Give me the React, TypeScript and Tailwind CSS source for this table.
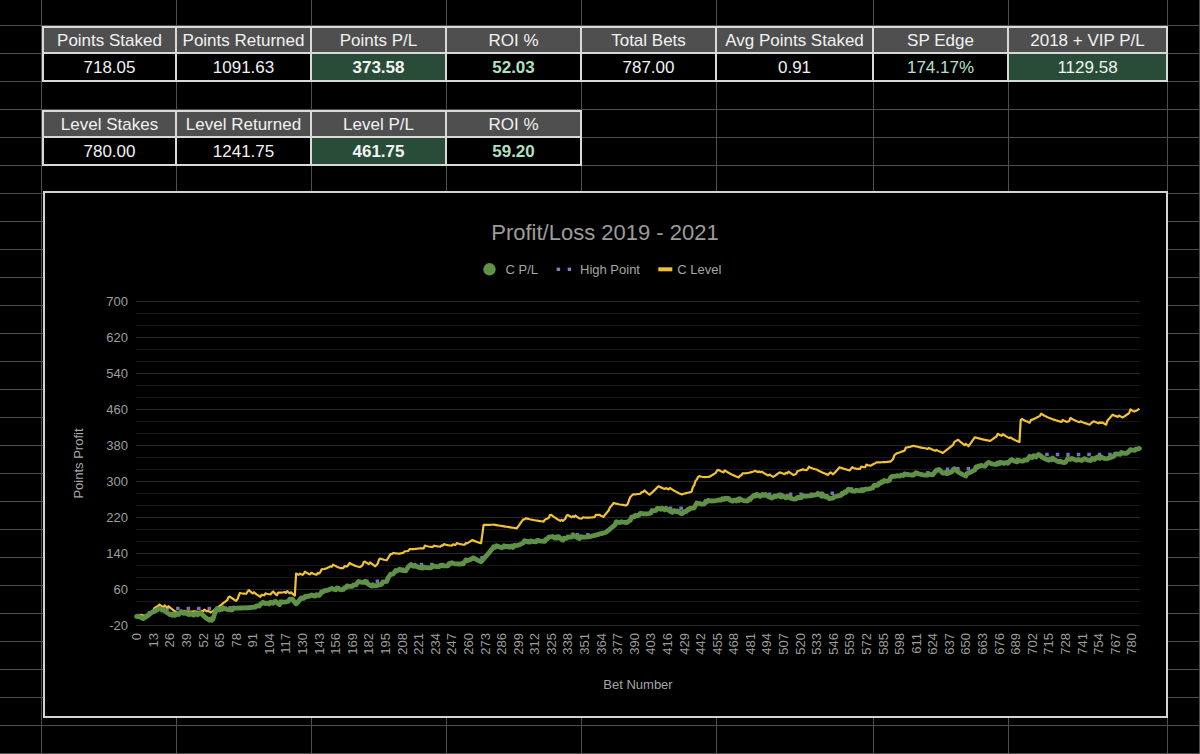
import React from "react";

function mulberry32(seed: number) {
  let a = seed;
  return function () {
    a |= 0;
    a = (a + 0x6d2b79f5) | 0;
    let t = Math.imul(a ^ (a >>> 15), 1 | a);
    t = (t + Math.imul(t ^ (t >>> 7), 61 | t)) ^ t;
    return ((t ^ (t >>> 14)) >>> 0) / 4294967296;
  };
}

function interp(keys: number[][], n: number): number[] {
  const out: number[] = [];
  let k = 0;
  for (let i = 0; i < n; i++) {
    while (k < keys.length - 2 && i > keys[k + 1][0]) k++;
    const [x0, y0] = keys[k];
    const [x1, y1] = keys[k + 1];
    const t = x1 === x0 ? 0 : (i - x0) / (x1 - x0);
    out.push(y0 + (y1 - y0) * Math.min(1, Math.max(0, t)));
  }
  return out;
}

function noise(n: number, seed: number, jump: number, decay: number, p: number, keep: number): number[] {
  const r = mulberry32(seed);
  let s = 0;
  const out: number[] = [];
  for (let i = 0; i < n; i++) {
    if (r() < p) s += jump * (0.5 + r());
    else s -= decay;
    s *= keep;
    out.push(s);
  }
  const mean = out.reduce((a, b) => a + b, 0) / n;
  return out.map((v, i) => (v - mean) * Math.min(1, i / 4, (n - 1 - i) / 4));
}

const N = 787;

const greenKeys = [
  [0, 0], [5, -3], [10, 8], [18, 22], [31, 0], [39, 4], [50, 4], [59, -8], [63, 11], [76, 18], [81, 22],
  [94, 26], [107, 29], [112, 26], [120, 38], [125, 28], [128, 40], [144, 48], [152, 63], [160, 61],
  [178, 77], [186, 68], [196, 80], [199, 96], [217, 107], [238, 114], [259, 122], [264, 133], [270, 126],
  [277, 149], [285, 154], [295, 149], [303, 166], [321, 171], [326, 179], [334, 170], [342, 179],
  [347, 174], [363, 188], [368, 192], [376, 211], [384, 212], [389, 222], [395, 225], [410, 240],
  [427, 229], [441, 248], [457, 263], [473, 255], [489, 265], [515, 263], [533, 275], [543, 262],
  [551, 272], [572, 285], [588, 300], [596, 314], [609, 318], [630, 318], [635, 314], [640, 326],
  [650, 316], [658, 331], [674, 340], [690, 344], [698, 349], [708, 354], [726, 344], [734, 349],
  [747, 349], [760, 352], [768, 363], [779, 366], [786, 373.58],
];

const yellowKeys = [
  [0, 0], [10, 4], [17, 23], [34, 7], [46, 14], [58, 7], [68, 33], [73, 44], [78, 37], [81, 48], [86, 51],
  [97, 43], [105, 48], [110, 43], [116, 53], [124, 44], [125, 88], [144, 92], [152, 111], [160, 108],
  [167, 112], [175, 111], [179, 120], [187, 111], [191, 126], [196, 126], [199, 141], [206, 142],
  [222, 154], [238, 157], [259, 161], [263, 171], [270, 166], [272, 207], [280, 208], [298, 200],
  [303, 220], [321, 214], [325, 222], [334, 212], [338, 223], [347, 216], [363, 226], [367, 222],
  [374, 252], [384, 250], [389, 270], [397, 277], [402, 270], [409, 292], [427, 274], [435, 281],
  [439, 300], [449, 311], [456, 326], [473, 311], [485, 326], [499, 311], [504, 323], [515, 314],
  [522, 327], [533, 327], [546, 314], [551, 333], [562, 326], [575, 333], [580, 344], [591, 348],
  [596, 363], [609, 381], [619, 377], [632, 366], [640, 385], [643, 392], [652, 377], [657, 400],
  [669, 394], [675, 406], [692, 390], [693, 439], [700, 433], [708, 448], [729, 433], [732, 437],
  [747, 429], [750, 437], [760, 427], [765, 448], [773, 443], [779, 457], [782, 455], [786, 461.75],
];

const gBase = interp(greenKeys, N);
const gNoise = noise(N, 17, 4, 0.6, 0.25, 0.8);
const green = gBase.map((v, i) => v + gNoise[i]);
const yBase = interp(yellowKeys, N);
const yNoise = noise(N, 91, 4.5, 0.7, 0.16, 0.85);
const yellow = yBase.map((v, i) => v + yNoise[i]);
const high: number[] = [];
{
  let m = -Infinity;
  for (const v of green) {
    m = Math.max(m, v);
    high.push(m);
  }
}

const PX = (i: number) => 136 + (i + 0.5) * (1004 / 787);
const PY = (v: number) => 301.5 + (700 - v) * 0.45;
const toPoints = (arr: number[]) => arr.map((v, i) => `${PX(i).toFixed(2)},${PY(v).toFixed(2)}`).join(" ");

const majors = [700, 620, 540, 460, 380, 300, 220, 140, 60, -20];
const minors: number[] = [];
for (let k = 0; k < majors.length - 1; k++) {
  minors.push(majors[k] - 80 / 3, majors[k] - 160 / 3);
}
const xLabels: number[] = [];
for (let k = 0; k <= 60; k++) xLabels.push(13 * k);

type CellSpec = { text: string; kind: "head" | "val" | "bold" | "boldlight" | "light" | "greenplain" };

const tableCells: Record<string, CellSpec> = {
  "1-1": { text: "Points Staked", kind: "head" },
  "1-2": { text: "Points Returned", kind: "head" },
  "1-3": { text: "Points P/L", kind: "head" },
  "1-4": { text: "ROI %", kind: "head" },
  "1-5": { text: "Total Bets", kind: "head" },
  "1-6": { text: "Avg Points Staked", kind: "head" },
  "1-7": { text: "SP Edge", kind: "head" },
  "1-8": { text: "2018 + VIP P/L", kind: "head" },
  "2-1": { text: "718.05", kind: "val" },
  "2-2": { text: "1091.63", kind: "val" },
  "2-3": { text: "373.58", kind: "bold" },
  "2-4": { text: "52.03", kind: "boldlight" },
  "2-5": { text: "787.00", kind: "val" },
  "2-6": { text: "0.91", kind: "val" },
  "2-7": { text: "174.17%", kind: "light" },
  "2-8": { text: "1129.58", kind: "greenplain" },
  "4-1": { text: "Level Stakes", kind: "head" },
  "4-2": { text: "Level Returned", kind: "head" },
  "4-3": { text: "Level P/L", kind: "head" },
  "4-4": { text: "ROI %", kind: "head" },
  "5-1": { text: "780.00", kind: "val" },
  "5-2": { text: "1241.75", kind: "val" },
  "5-3": { text: "461.75", kind: "bold" },
  "5-4": { text: "59.20", kind: "boldlight" },
};

const kindClass: Record<CellSpec["kind"], string> = {
  head: "bg-[#4f4f4f] text-[#f2f2f2]",
  val: "bg-black text-[#f2f2f2]",
  bold: "bg-[#284c38] text-[#f4f4f4] font-bold",
  boldlight: "bg-black text-[#b0e0c2] font-bold",
  light: "bg-black text-[#b7e1cd]",
  greenplain: "bg-[#284c38] text-[#f2f2f2]",
};

function Cell({ r, c }: { r: number; c: number }) {
  const spec = tableCells[`${r}-${c}`];
  if (!spec) {
    return <div className="border-r border-b border-[#4e4e4e]" />;
  }
  const top = r === 1 || r === 4;
  const left = c === 1;
  return (
    <div
      className={`flex items-center justify-center border-r-2 border-b-2 border-[#d9d9d9] text-[17px] leading-none whitespace-nowrap ${
        top ? "border-t-2" : ""
      } ${left ? "border-l-2" : ""} ${kindClass[spec.kind]}`}
    >
      {spec.text}
    </div>
  );
}

function Chart() {
  return (
    <div className="absolute left-[43px] top-[191px] w-[1125px] h-[527px] border-2 border-[#d4d4d4] bg-black">
      <svg width="1121" height="523" viewBox="45 193 1121 523" className="block" fontFamily="'Liberation Sans', Arial, sans-serif">
        <text x="605" y="239.5" textAnchor="middle" fontSize="22" fill="#9c9c9c">
          Profit/Loss 2019 - 2021
        </text>
        {/* legend */}
        <circle cx="489.5" cy="269.3" r="6.2" fill="#5f9146" />
        <text x="505.5" y="274" fontSize="13" fill="#a6a6a6">C P/L</text>
        <rect x="556.7" y="267.6" width="3.4" height="3.4" fill="#8e7cc3" />
        <rect x="567.7" y="267.6" width="3.4" height="3.4" fill="#8e7cc3" />
        <text x="580" y="274" fontSize="13" fill="#a6a6a6">High Point</text>
        <rect x="658.3" y="267.3" width="14" height="4" fill="#f1c232" />
        <text x="677.3" y="274" fontSize="13" fill="#a6a6a6">C Level</text>

        {/* gridlines */}
        {minors.map((v) => (
          <line key={`mi${v}`} x1="136" x2="1140" y1={PY(v)} y2={PY(v)} stroke="#171717" strokeWidth="1" />
        ))}
        {majors.map((v) => (
          <line key={`ma${v}`} x1="136" x2="1140" y1={PY(v)} y2={PY(v)} stroke="#282828" strokeWidth="1" />
        ))}
        {majors.map((v) => (
          <text key={`yl${v}`} x="128" y={PY(v) + 4.6} textAnchor="end" fontSize="13" fill="#9e9e9e">
            {v}
          </text>
        ))}
        {xLabels.map((i) => {
          const bx = PX(i) + 4.6;
          return (
            <text
              key={`xl${i}`}
              x={bx}
              y="633"
              textAnchor="end"
              fontSize="13"
              fill="#9e9e9e"
              transform={`rotate(-90 ${bx} 633)`}
            >
              {i}
            </text>
          );
        })}
        <text x="83" y="463.5" textAnchor="middle" fontSize="13" fill="#a6a6a6" transform="rotate(-90 83 463.5)">
          Points Profit
        </text>
        <text x="638" y="689" textAnchor="middle" fontSize="13" fill="#a6a6a6">
          Bet Number
        </text>

        {/* series */}
        <polyline points={toPoints(high)} fill="none" stroke="#7d6fc0" strokeWidth="3.5" strokeDasharray="3.5 7" />
        <polyline points={toPoints(yellow)} fill="none" stroke="#f1c232" strokeWidth="2.2" strokeLinejoin="round" />
        <polyline points={toPoints(green)} fill="none" stroke="#5f9146" strokeWidth="4.8" strokeLinejoin="round" strokeLinecap="round" />
      </svg>
    </div>
  );
}

export default function App() {
  const rows = Array.from({ length: 27 }, (_, r) => r);
  const cols = Array.from({ length: 10 }, (_, c) => c);
  return (
    <div className="relative w-[1200px] h-[754px] overflow-hidden bg-black font-['Liberation_Sans',Arial,sans-serif]">
      <div className="grid grid-cols-[42px_135px_135px_135px_135px_135px_157px_135px_159px_1fr] grid-rows-[26px_repeat(26,28px)] w-full h-full">
        {rows.map((r) => cols.map((c) => <Cell key={`${r}-${c}`} r={r} c={c} />))}
      </div>
      <Chart />
    </div>
  );
}
